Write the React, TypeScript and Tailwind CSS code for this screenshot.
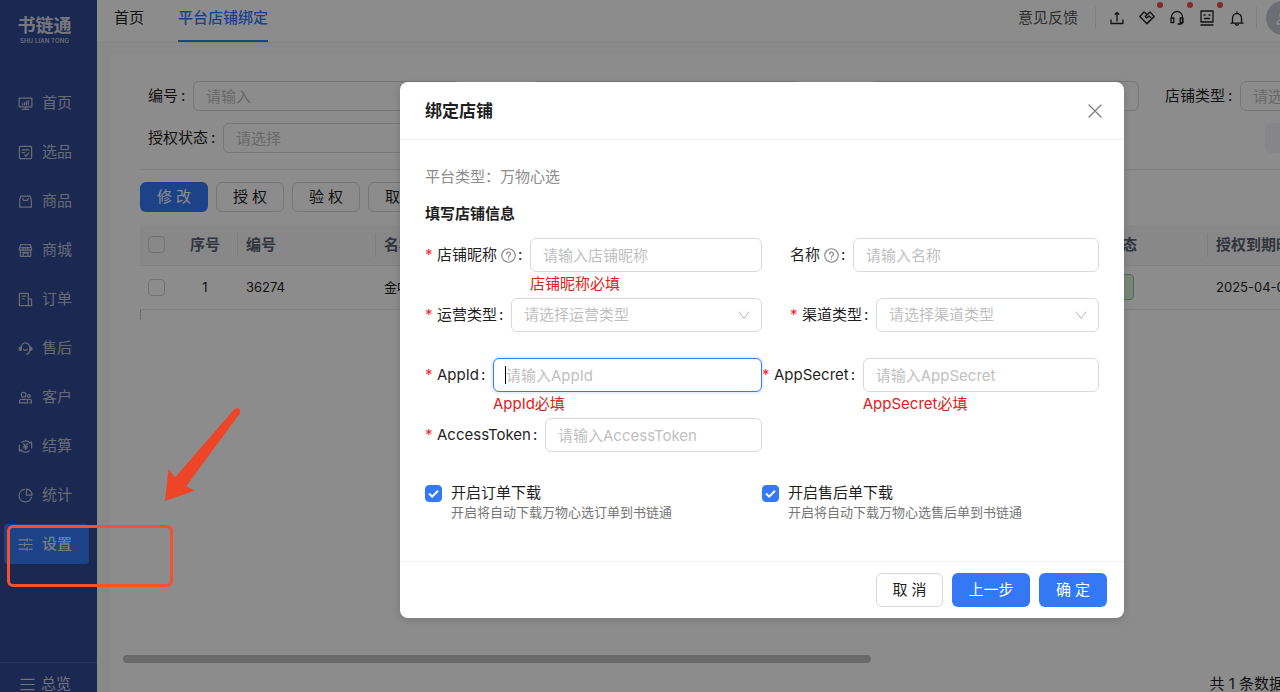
import { useState } from 'react'
import type { ReactNode } from 'react'
import clsx from 'clsx'

interface NavItem {
  label: string
  icon: ReactNode
  active?: boolean
}

function Icon({ children, className = 'size-4' }: { children: ReactNode; className?: string }) {
  return (
    <svg
      viewBox="0 0 16 16"
      fill="none"
      stroke="currentColor"
      strokeWidth="1.3"
      strokeLinecap="round"
      strokeLinejoin="round"
      aria-hidden="true"
      className={clsx('shrink-0', className)}
    >
      {children}
    </svg>
  )
}

const NAV_ITEMS: NavItem[] = [
  {
    label: '首页',
    icon: (
      <>
        <path d="M1.2 2.200h13.600v9.300H1.200zM8 11.500v2.500M4.500 14.200h7" />
        <path d="M5 8v1.400M7 7v2.400M9 6v3.400M11 5v4.400" />
      </>
    ),
  },
  {
    label: '选品',
    icon: (
      <>
        <rect x="1.500" y="1.500" width="13" height="13" rx="1" />
        <path d="M4.500 5.200h7M4.500 8.200h2.500M7 10.500l1.500 1.500L11.500 8.500" />
      </>
    ),
  },
  {
    label: '商品',
    icon: <path d="M3.200 2.200h9.600L14.200 6v8H1.800V6zM5 4.800l1 2h4l1-2" />,
  },
  {
    label: '商城',
    icon: (
      <>
        <path d="M2.800 1.800h10.400l1.200 3.700v2H1.600v-2zM1.800 5h12.400M5.500 5v2.300M8 5v2.300M10.500 5v2.300" />
        <path d="M2.500 7.500v6.700h11V7.500M5.500 14v-2.500q2.500-2 5 0V14M4.500 10h7" />
      </>
    ),
  },
  {
    label: '订单',
    icon: <path d="M1.500 1.500h9.500v13H1.500zM11 7.500h3.500v7H11M4.500 4.500h4M4.500 7.200h2" />,
  },
  {
    label: '售后',
    icon: (
      <>
        <path d="M3.500 9.500V7a4.500 5 0 0 1 9 0v2.500c0 2-1.500 4-3.500 4.500M6 9q2 1.500 4 0" />
        <path d="M2.800 6.500Q1 7 1 8.300t1.800 1.700zM13.200 6.500Q15 7 15 8.300t-1.800 1.700z" fill="currentColor" />
      </>
    ),
  },
  {
    label: '客户',
    icon: (
      <>
        <circle cx="6" cy="5" r="2.500" />
        <path d="M1.700 13.800V12a2 2 0 0 1 2-2h4.600a2 2 0 0 1 2 2v1.800zM11 10h1.800a1.500 1.500 0 0 1 1.500 1.500v2.300h-1.500" />
        <circle cx="11.600" cy="6.500" r="1.500" />
      </>
    ),
  },
  {
    label: '结算',
    icon: (
      <>
        <path d="M4 3.500A6 6 0 0 1 12.500 4M12 12.500A6 6 0 0 1 3.500 12M1.500 6.500V13l2-1.500M14.500 9.500V3l-2 1.500" />
        <path d="M6 5l2 2.500L10 5M8 7.500V11M6 7.700h4M6 9.400h4" />
      </>
    ),
  },
  {
    label: '统计',
    icon: (
      <path d="M6.800 1.500A6.700 6.700 0 1 0 14.300 10M9 1.200v6.500h6A6.300 6.300 0 0 0 9 1.200z" />
    ),
  },
  {
    label: '设置',
    active: true,
    icon: (
      <path d="M1 3h8.500M12 3h3M9.800 1.500v3M1 8h4.500M7.500 8H15M7 6.500v3M1 13h8.500M12 13h3M9.800 11.500v3" />
    ),
  },
]

const HEADER_ICONS = [
  {
    label: '导出',
    dot: false,
    icon: <path d="M2 10v3.500h12V10M8 11V2.500M6.200 4.300L8 2.500l1.800 1.800" />,
  },
  {
    label: '合作',
    dot: true,
    icon: (
      <path d="M7.500 4L5 2 .8 6.500 8 13.800l7.200-7.300L11 2 6.200 6.500 7.700 8 10 6l3 2.700M8 13.500l2.500-2.800" />
    ),
  },
  {
    label: '客服',
    dot: true,
    icon: (
      <path d="M2.500 8V7a5.500 5.500 0 0 1 11 0v5a2 2 0 0 1-2 2H9M2 8h2.800v4.500H2zM11.200 8H14v4.500h-2.800z" />
    ),
  },
  {
    label: '助手',
    dot: true,
    icon: <path d="M2 1h12v11H2zM2 15h12M5 5h1M10 5h1M5.500 8.500h5" />,
  },
  {
    label: '通知',
    dot: false,
    icon: <path d="M2 13.200h12M3.500 13V8a4.500 4.500 0 0 1 9 0v5M8 3.500V2M6.500 14.500q1.500 1.300 3 0" />,
  },
]

function Sidebar() {
  return (
    <aside className="flex w-[97px] shrink-0 flex-col bg-[#314a96] text-[#bcc3d8]">
      <div className="flex flex-col items-center pr-2 pt-4 text-[#d8dbe6]">
        <span className="text-[18px] font-bold leading-5">书链通</span>
        <span className="text-[6px] font-medium leading-[9px] tracking-wide">SHU LIAN TONG</span>
      </div>
      <nav className="mt-[38px] flex flex-col gap-[9px] pl-1 pr-2">
        {NAV_ITEMS.map(item => (
          <a
            key={item.label}
            href="#"
            className={clsx(
              'flex h-10 items-center gap-[9px] rounded pl-[14px]',
              item.active && 'bg-[#3478f6] font-medium text-[#e0e4ee]'
            )}
          >
            <Icon className="size-[15px]">{item.icon}</Icon>
            {item.label}
          </a>
        ))}
      </nav>
      <a
        href="#"
        className="mt-auto flex items-center gap-[6px] border-t border-[#4c62a6] pl-5 pt-[13px] leading-4 text-[#d0d4e0]"
      >
        <Icon className="size-[15px]">
          <path d="M1 2.500h14M1 8h14M1 13.500h14" />
        </Icon>
        总览
      </a>
    </aside>
  )
}

function TopBar() {
  return (
    <header className="flex h-[43px] items-center border-b border-[#f0f0f0] bg-white pl-[17px] pr-[224px]">
      <nav className="flex gap-[34px] self-stretch">
        <a href="#" className="pt-[7px]">
          首页
        </a>
        <a href="#" className="border-b-2 border-[#3478f6] pt-[7px] font-medium text-[#3478f6]">
          平台店铺绑定
        </a>
      </nav>
      <div className="ml-auto flex items-center pb-[7px]">
        <a href="#" className="text-[#555]">
          意见反馈
        </a>
        <span className="ml-[17px] h-[22px] w-px bg-[#e5e5e5]" />
        <div className="flex gap-[14px] pl-[13px] pr-[11px]">
          {HEADER_ICONS.map(item => (
            <button key={item.label} type="button" aria-label={item.label} className="relative">
              <Icon>{item.icon}</Icon>
              {item.dot && (
                <span className="absolute -right-2 -top-2 size-[6px] rounded-full bg-[#f5484b]" />
              )}
            </button>
          ))}
        </div>
        <span className="h-[22px] w-px bg-[#e5e5e5]" />
        <span className="ml-[9px] flex size-[34px] items-center justify-center rounded-full bg-[#c5c9d3] text-white">
          <Icon>
            <circle cx="8" cy="5" r="3" />
            <path d="M2 14a6 5 0 0 1 12 0z" />
          </Icon>
        </span>
      </div>
    </header>
  )
}

function FilterField({ id, label, placeholder }: { id: string; label: string; placeholder: string }) {
  return (
    <div className="flex h-[30px] items-center">
      <label htmlFor={id} className="flex shrink-0">
        {label}
        <span className="w-[15px] pl-[3px]">:</span>
      </label>
      <input
        id={id}
        placeholder={placeholder}
        className="h-full w-full min-w-0 rounded-md border border-[#d9d9d9] bg-transparent px-3 placeholder:text-[#bfbfbf]"
      />
    </div>
  )
}

const TABLE_COLUMNS = [
  { label: '编号', value: '36274', width: 'w-[138px]' },
  { label: '名称', value: '金叶图书', width: 'w-[693px]' },
  { label: '授权状态', value: '已授权', width: 'w-[139px]' },
  { label: '授权到期时间', value: '2025-04-03', width: 'w-[275px]' },
]

function ShopTable() {
  return (
    <table className="mt-[13px] w-full table-fixed text-left">
      <thead>
        <tr className="h-10 border-b border-[#ebebeb] bg-[#f8f8f9] text-[#5c6270]">
          <th className="w-[33px]">
            <input
              type="checkbox"
              aria-label="全选"
              className="ml-2 block size-[17px] appearance-none rounded border border-[#d0d0d0]"
            />
          </th>
          <th className="w-[64px] text-center font-semibold">序号</th>
          {TABLE_COLUMNS.map(col => (
            <th key={col.label} className={clsx('font-semibold', col.width)}>
              <span className="flex h-6 items-center border-l border-[#e3e3e3] pl-2">{col.label}</span>
            </th>
          ))}
        </tr>
      </thead>
      <tbody>
        <tr className="h-11 border-b border-[#ebebeb] text-[13px]">
          <td>
            <input
              type="checkbox"
              aria-label="选择 36274"
              className="ml-2 block size-[17px] appearance-none rounded border border-[#d0d0d0]"
            />
          </td>
          <td className="text-center">1</td>
          {TABLE_COLUMNS.map(col => (
            <td key={col.label} className="pl-[9px]">
              {col.label === '授权状态' ? (
                <span className="inline-block rounded border border-[#7bd97f] bg-[#dff3df] px-2 leading-6 text-[#52c41a]">
                  {col.value}
                </span>
              ) : (
                col.value
              )}
            </td>
          ))}
        </tr>
      </tbody>
    </table>
  )
}

function ShopPage() {
  return (
    <main className="flex grow flex-col bg-[#f9f9fa] pl-[13px] pr-3 pt-3">
      <div className="flex grow flex-col bg-white">
        <div className="mx-[30px] border-b border-[#ebebeb] pb-4 pt-[26px]">
          <div className="grid grid-cols-4 gap-x-[26px] gap-y-3 pl-2 pr-1">
            <FilterField id="shop-no" label="编号" placeholder="请输入" />
            <FilterField id="shop-name" label="名称" placeholder="请输入" />
            <FilterField id="platform" label="平台" placeholder="请选择" />
            <FilterField id="shop-type" label="店铺类型" placeholder="请选择" />
            <FilterField id="auth-state" label="授权状态" placeholder="请选择" />
            <div className="col-span-3 ml-auto w-[213px] rounded-md bg-[#f4f4f7]" />
          </div>
        </div>
        <div className="mx-[30px] mt-3">
          <div className="flex gap-2">
            <button
              type="button"
              className="h-[30px] w-[68px] rounded-md bg-[#3478f6] text-white"
            >
              修 改
            </button>
            {['授 权', '验 权', '取 消'].map(text => (
              <button
                key={text}
                type="button"
                className="h-[30px] w-[68px] rounded-md border border-[#d9d9d9]"
              >
                {text}
              </button>
            ))}
          </div>
          <ShopTable />
          <div className="h-[10px] border-l border-dashed border-[#c0c0c0]" />
        </div>
        <div className="ml-[13px] mt-auto h-2 w-[748px] rounded-full bg-[#c2c2c2]" />
        <p className="mt-[13px] pr-[228px] text-right leading-4">共 1 条数据</p>
      </div>
    </main>
  )
}

interface FieldProps {
  id: string
  label: string
  placeholder: string
  required?: boolean
  help?: boolean
  select?: boolean
  focused?: boolean
  error?: string
  indent?: boolean
}

const FIELDS: FieldProps[] = [
  { id: 'nickname', label: '店铺昵称', placeholder: '请输入店铺昵称', required: true, help: true, error: '店铺昵称必填' },
  { id: 'name', label: '名称', placeholder: '请输入名称', help: true, indent: true },
  { id: 'operation', label: '运营类型', placeholder: '请选择运营类型', required: true, select: true },
  { id: 'channel', label: '渠道类型', placeholder: '请选择渠道类型', required: true, select: true, indent: true },
  { id: 'app-id', label: 'AppId', placeholder: '请输入AppId', required: true, focused: true, error: 'AppId必填' },
  { id: 'app-secret', label: 'AppSecret', placeholder: '请输入AppSecret', required: true, error: 'AppSecret必填' },
  { id: 'access-token', label: 'AccessToken', placeholder: '请输入AccessToken', required: true },
]

function FormField({ id, label, placeholder, required, help, select, focused, error, indent }: FieldProps) {
  return (
    <div className={clsx('flex h-[60px]', indent && 'pl-7')}>
      <label htmlFor={id} className="flex h-[34px] shrink-0 items-center">
        {required && <span className="w-3 text-[#f5222d]">*</span>}
        {label}
        {help && (
          <Icon className="ml-1 size-[15px] text-[#8c8c8c]">
            <circle cx="8" cy="8" r="7.200" />
            <path d="M5.900 6.300a2.100 2 0 1 1 3.200 1.800Q8 8.700 8 9.700M8 11.700v.1" />
          </Icon>
        )}
        <span className="w-[14px] pl-[2px]">:</span>
      </label>
      <div className="min-w-0 grow">
        <div className="relative h-[34px]">
          {select ? (
            <>
              <select
                id={id}
                className="size-full appearance-none rounded-md border border-[#d9d9d9] bg-white px-3 text-[#bfbfbf]"
              >
                <option>{placeholder}</option>
              </select>
              <Icon className="pointer-events-none absolute right-3 top-[11px] size-3 text-[#b5b5b5]">
                <path d="M1.500 4L8 12.500 14.500 4" />
              </Icon>
            </>
          ) : (
            <input
              id={id}
              placeholder={placeholder}
              className={clsx(
                'size-full rounded-md border bg-white px-3 outline-none placeholder:text-[#bfbfbf]',
                focused ? 'border-[#3478f6] caret-transparent ring-2 ring-[#3478f6]/10' : 'border-[#d9d9d9]'
              )}
            />
          )}
          {focused && <span className="absolute left-3 top-2 h-[18px] w-px bg-black" />}
        </div>
        {error && <p className="leading-6 text-[#e02020]">{error}</p>}
      </div>
    </div>
  )
}

function DownloadOption({ id, title, desc }: { id: string; title: string; desc: string }) {
  const [checked, setChecked] = useState(true)

  return (
    <div className="flex gap-[9px]">
      <span className="relative mt-[3px] size-[17px] shrink-0">
        <input
          id={id}
          type="checkbox"
          checked={checked}
          onChange={e => setChecked(e.target.checked)}
          className="block size-full appearance-none rounded border border-[#d9d9d9] checked:border-[#3478f6] checked:bg-[#3478f6]"
        />
        {checked && (
          <svg viewBox="0 0 17 17" className="pointer-events-none absolute inset-0 text-white" aria-hidden="true">
            <path d="M4 8.500l3.200 3.200L13 5.800" fill="none" stroke="currentColor" strokeWidth="2" />
          </svg>
        )}
      </span>
      <div>
        <label htmlFor={id} className="block">
          {title}
        </label>
        <p className="text-[13px] leading-4 text-[#767676]">{desc}</p>
      </div>
    </div>
  )
}

function BindShopModal() {
  return (
    <div
      role="dialog"
      aria-labelledby="bind-title"
      className="w-[724px] rounded-lg bg-white shadow-[0_2px_8px_rgba(0,0,0,0.15)]"
    >
      <div className="flex h-[58px] items-center justify-between border-b border-[#f0f0f0] pl-[25px] pr-[21px]">
        <h2 id="bind-title" className="text-[17px] font-semibold">
          绑定店铺
        </h2>
        <button type="button" aria-label="关闭" className="text-[#808080]">
          <Icon>
            <path d="M2 2l12 12M14 2L2 14" />
          </Icon>
        </button>
      </div>
      <form className="px-[25px] pb-[41px] pt-[26px]">
        <p className="text-[#8c8c8c]">平台类型：万物心选</p>
        <h3 className="mt-[15px] font-semibold">填写店铺信息</h3>
        <div className="mt-[13px] grid grid-cols-2">
          {FIELDS.map(field => (
            <FormField key={field.id} {...field} />
          ))}
        </div>
        <div className="mt-1 grid grid-cols-2">
          <DownloadOption id="order-download" title="开启订单下载" desc="开启将自动下载万物心选订单到书链通" />
          <DownloadOption id="refund-download" title="开启售后单下载" desc="开启将自动下载万物心选售后单到书链通" />
        </div>
      </form>
      <div className="flex justify-end gap-[9px] border-t border-[#f0f0f0] px-[17px] py-[11px]">
        <button type="button" className="h-[34px] w-[67px] rounded-md border border-[#d9d9d9]">
          取 消
        </button>
        <button type="button" className="h-[34px] w-[78px] rounded-md bg-[#3478f6] text-white">
          上一步
        </button>
        <button type="button" className="h-[34px] w-[68px] rounded-md bg-[#3478f6] text-white">
          确 定
        </button>
      </div>
    </div>
  )
}

export default function App() {
  return (
    <div className="h-screen overflow-hidden font-['Inter','Noto_Sans_CJK_SC',sans-serif] text-[15px] leading-[22px] text-[#1f1f1f]">
      <div className="relative flex h-full min-w-[1524px]">
        <Sidebar />
        <div className="flex grow flex-col">
          <TopBar />
          <ShopPage />
        </div>

        <div className="absolute inset-0 flex items-start justify-center bg-black/45 pt-[82px]">
          <BindShopModal />
        </div>

        {/* guide marks pointing at the settings entry */}
        <div className="pointer-events-none absolute left-[7px] top-[525px] h-[62px] w-[166px] rounded-md border-[3px] border-[#f4512c]" />
        <svg
          viewBox="0 0 80 96"
          className="pointer-events-none absolute left-[163px] top-[406px] h-24 w-20 text-[#ee4427]"
          aria-hidden="true"
        >
          <path
            d="M71.500 3Q75 .5 77 4.500 77.500 6.500 76 8.500L23 80.500 32 84.500 2 95 5.500 63 12 71.500z"
            fill="currentColor"
          />
        </svg>
      </div>
    </div>
  )
}
